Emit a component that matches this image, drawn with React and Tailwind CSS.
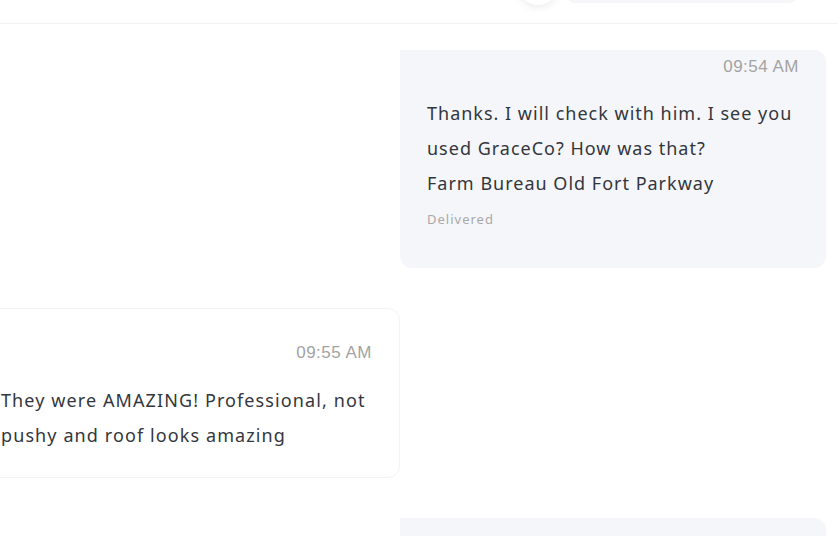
import React from 'react';

const body = { fontFamily: '"Noto Sans", Lato, sans-serif' };
const stamp = { fontFamily: '"Liberation Sans", Arial, sans-serif' };

const RightBubble = ({ time, lines, status }) => (
  <div className="ml-[400px] w-[426px] bg-[#f5f6fa] rounded-[12px] rounded-tl-none pl-[27px] pr-[27px] pt-[7px] pb-[41px]">
    <div className="text-right text-[17px] leading-[20px] tracking-[0.5px] text-[#a3a3a3]" style={stamp}>{time}</div>
    <div className="mt-[19px] text-[18px] leading-[35px] text-[#33373d] tracking-[1px]" style={body}>
      {lines.map((l) => (
        <div key={l}>{l}</div>
      ))}
    </div>
    <div className="mt-[10px] text-[13px] leading-[16px] text-[#a9a9a9] tracking-[1px]" style={body}>{status}</div>
  </div>
);

const LeftBubble = ({ time, lines }) => (
  <div className="ml-[-26px] w-[426px] bg-white border border-[#f3f3f5] rounded-[12px] pl-[26px] pr-[27px] pt-[34px] pb-[24px]">
    <div className="text-right text-[17px] leading-[20px] tracking-[0.5px] text-[#a3a3a3]" style={stamp}>{time}</div>
    <div className="mt-[20px] text-[18px] leading-[35px] text-[#33373d] tracking-[1.1px]" style={body}>
      {lines.map((l) => (
        <div key={l}>{l}</div>
      ))}
    </div>
  </div>
);

export default function App() {
  return (
    <div className="w-[838px] h-[536px] bg-white overflow-hidden">
      {/* header, mostly scrolled out of view */}
      <div className="h-[24px] border-b border-[#f2f2f5] overflow-hidden">
        <div className="flex justify-end items-end pr-[41px] mt-[-37px]">
          <div className="w-[40px] h-[40px] rounded-full bg-white shadow-[0_2px_8px_rgba(0,0,0,0.08)]" />
          <div className="ml-[9px] w-[230px] h-[40px] rounded-lg bg-[#f6f6f9] mb-[2px]" />
        </div>
      </div>

      <div className="pt-[26px] flex flex-col gap-[40px]">
        <RightBubble
          time="09:54 AM"
          lines={['Thanks. I will check with him. I see you', 'used GraceCo? How was that?', 'Farm Bureau Old Fort Parkway']}
          status="Delivered"
        />
        <LeftBubble
          time="09:55 AM"
          lines={['They were AMAZING! Professional, not', 'pushy and roof looks amazing']}
        />
        <div className="ml-[400px] w-[426px] h-[60px] bg-[#f5f6fa] rounded-[12px] rounded-tl-none" />
      </div>
    </div>
  );
}
